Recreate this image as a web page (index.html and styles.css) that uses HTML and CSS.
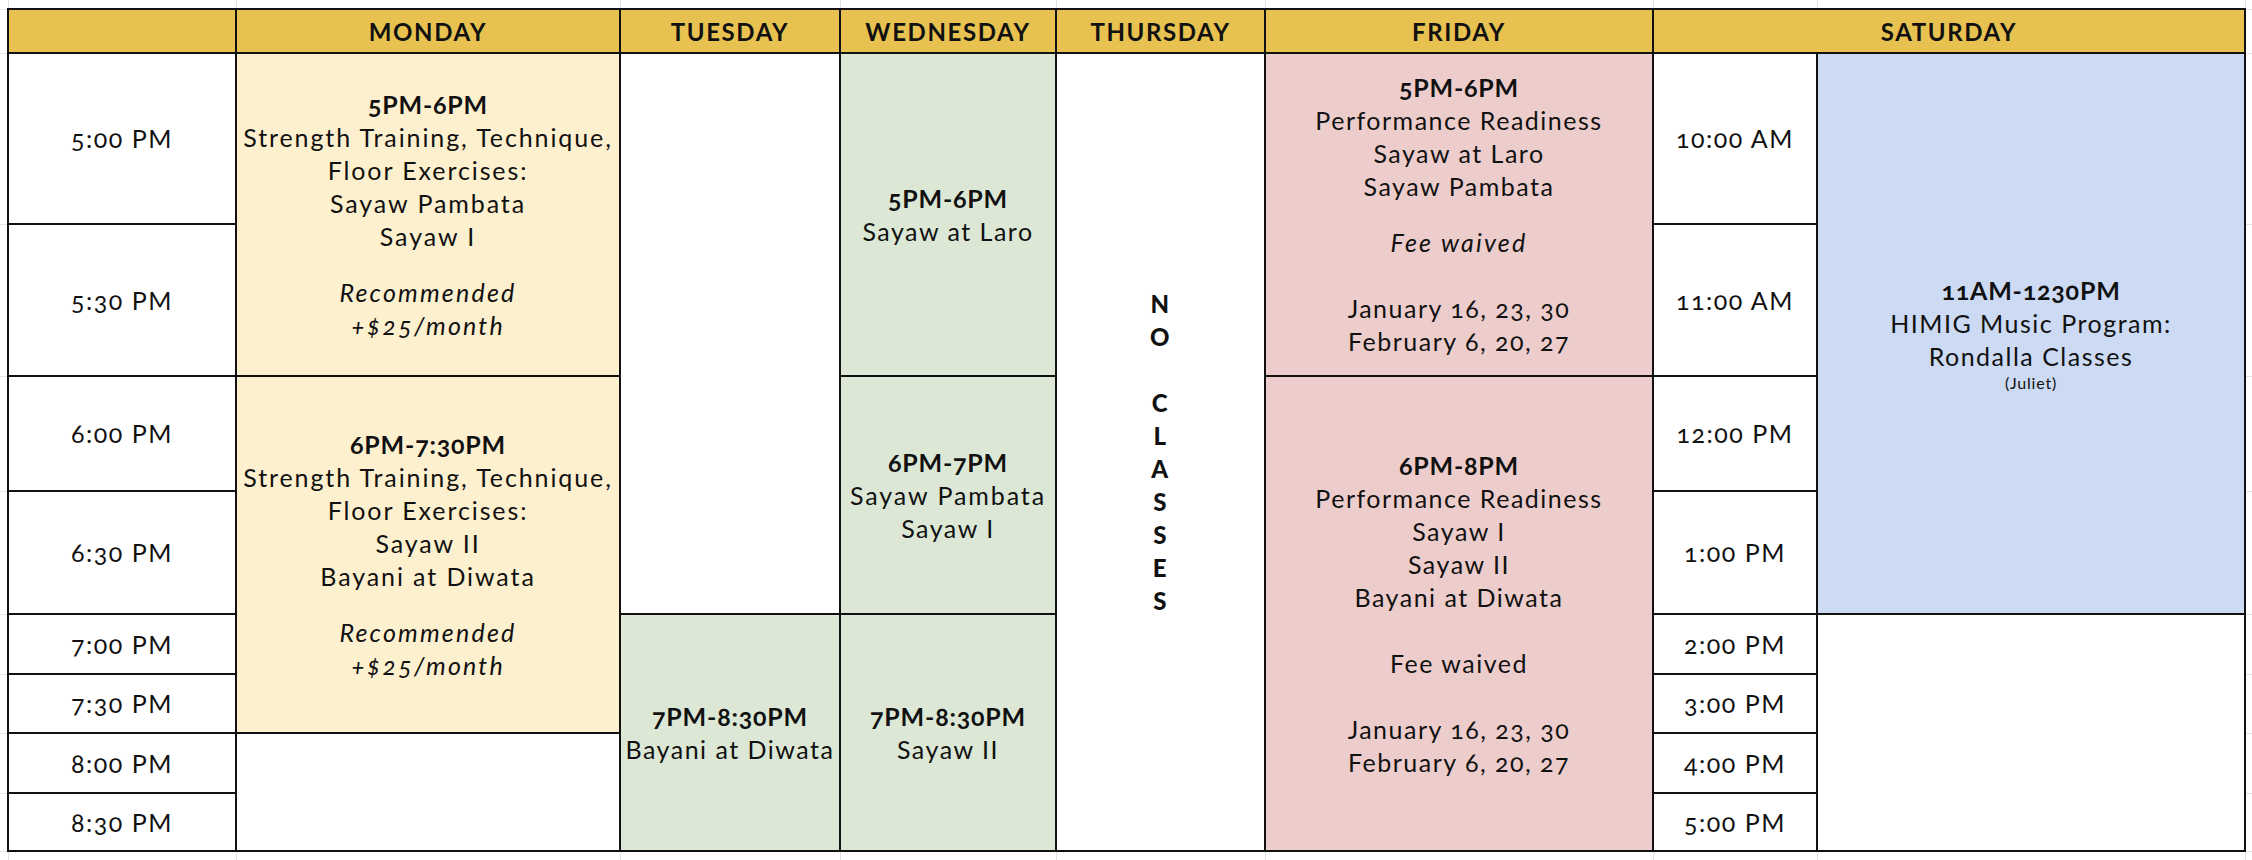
FILE: index.html
```html
<!DOCTYPE html>
<html lang="en">
<head>
<meta charset="utf-8">
<title>Class Schedule</title>
<link rel="stylesheet" href="styles.css">
</head>
<body>
<div class="page">
  <div class="strip-corner"></div>
  <div class="strip-top">
    <div></div><div></div><div></div><div></div><div></div><div></div><div></div><div></div><div></div>
  </div>
  <div class="strip-corner"></div>

  <div class="strip-left">
    <div></div><div></div><div></div><div></div><div></div><div></div><div></div><div></div><div></div><div></div>
  </div>

  <div class="schedule">
    <div class="cell head c1"></div>
    <div class="cell head c2">MONDAY</div>
    <div class="cell head c3">TUESDAY</div>
    <div class="cell head c4">WEDNESDAY</div>
    <div class="cell head c5">THURSDAY</div>
    <div class="cell head c6">FRIDAY</div>
    <div class="cell head c78">SATURDAY</div>

    <div class="cell time c1 r2">5:00 PM</div>
    <div class="cell time c1 r3">5:30 PM</div>
    <div class="cell time c1 r4">6:00 PM</div>
    <div class="cell time c1 r5">6:30 PM</div>
    <div class="cell time c1 r6">7:00 PM</div>
    <div class="cell time c1 r7">7:30 PM</div>
    <div class="cell time c1 r8">8:00 PM</div>
    <div class="cell time c1 r9">8:30 PM</div>

    <div class="cell yellow c2 r2-3">
      <div class="block mon">
        <div class="title">5PM-6PM</div>
        <div>Strength Training, Technique,</div>
        <div>Floor Exercises:</div>
        <div>Sayaw Pambata</div>
        <div>Sayaw I</div>
        <div class="gap-s"></div>
        <div class="it">Recommended</div>
        <div class="it">+$25/month</div>
      </div>
    </div>
    <div class="cell yellow c2 r4-7">
      <div class="block mon">
        <div class="title">6PM-7:30PM</div>
        <div>Strength Training, Technique,</div>
        <div>Floor Exercises:</div>
        <div>Sayaw II</div>
        <div>Bayani at Diwata</div>
        <div class="gap-s"></div>
        <div class="it">Recommended</div>
        <div class="it">+$25/month</div>
      </div>
    </div>
    <div class="cell c2 r8-9"></div>

    <div class="cell c3 r2-5"></div>
    <div class="cell green c3 r6-9">
      <div class="block">
        <div class="title">7PM-8:30PM</div>
        <div>Bayani at Diwata</div>
      </div>
    </div>

    <div class="cell green c4 r2-3">
      <div class="block">
        <div class="title">5PM-6PM</div>
        <div>Sayaw at Laro</div>
      </div>
    </div>
    <div class="cell green c4 r4-5">
      <div class="block">
        <div class="title">6PM-7PM</div>
        <div class="wide">Sayaw Pambata</div>
        <div>Sayaw I</div>
      </div>
    </div>
    <div class="cell green c4 r6-9">
      <div class="block">
        <div class="title">7PM-8:30PM</div>
        <div>Sayaw II</div>
      </div>
    </div>

    <div class="cell c5 r2-9">
      <div class="block vertical">
        <div>N</div><div>O</div><div class="gap-l"></div><div>C</div><div>L</div><div>A</div><div>S</div><div>S</div><div>E</div><div>S</div>
      </div>
    </div>

    <div class="cell pink c6 r2-3">
      <div class="block">
        <div class="title">5PM-6PM</div>
        <div>Performance Readiness</div>
        <div>Sayaw at Laro</div>
        <div>Sayaw Pambata</div>
        <div class="gap-s"></div>
        <div class="it">Fee waived</div>
        <div class="gap-l"></div>
        <div>January 16, 23, 30</div>
        <div>February 6, 20, 27</div>
      </div>
    </div>
    <div class="cell pink c6 r4-9">
      <div class="block">
        <div class="title">6PM-8PM</div>
        <div>Performance Readiness</div>
        <div>Sayaw I</div>
        <div>Sayaw II</div>
        <div>Bayani at Diwata</div>
        <div class="gap-l"></div>
        <div>Fee waived</div>
        <div class="gap-l"></div>
        <div>January 16, 23, 30</div>
        <div>February 6, 20, 27</div>
      </div>
    </div>

    <div class="cell time c7 r2">10:00 AM</div>
    <div class="cell time c7 r3">11:00 AM</div>
    <div class="cell time c7 r4">12:00 PM</div>
    <div class="cell time c7 r5">1:00 PM</div>
    <div class="cell time c7 r6">2:00 PM</div>
    <div class="cell time c7 r7">3:00 PM</div>
    <div class="cell time c7 r8">4:00 PM</div>
    <div class="cell time c7 r9">5:00 PM</div>

    <div class="cell blue c8 r2-5">
      <div class="block">
        <div class="title">11AM-1230PM</div>
        <div>HIMIG Music Program:</div>
        <div>Rondalla Classes</div>
        <div class="small">(Juliet)</div>
      </div>
    </div>
    <div class="cell c8 r6-9"></div>
  </div>

  <div class="strip-right">
    <div></div><div></div><div></div><div></div><div></div><div></div><div></div><div></div><div></div><div></div>
  </div>

  <div class="strip-corner"></div>
  <div class="strip-bottom">
    <div></div><div></div><div></div><div></div><div></div><div></div><div></div><div></div><div></div>
  </div>
  <div class="strip-corner"></div>
</div>
</body>
</html>
```

FILE: styles.css
```css
* { box-sizing: border-box; }

html, body {
  margin: 0;
  padding: 0;
  background: #ffffff;
}

body {
  font-family: Lato, "Noto Sans", "Liberation Sans", sans-serif;
  font-feature-settings: "onum" 1;
  color: #111111;
  width: 2252px;
  height: 860px;
  overflow: hidden;
}

.page {
  display: grid;
  grid-template-columns: 7px 2239px 6px;
  grid-template-rows: 8px 844px 8px;
}

/* faint spreadsheet gridlines outside the table */
.strip-top, .strip-bottom {
  display: grid;
  grid-template-columns: 2px 228px 384px 220px 216px 209px 388px 164px 428px;
}
.strip-top > div, .strip-bottom > div {
  border-right: 1px solid #e3e3e3;
}
.strip-left, .strip-right {
  display: grid;
  grid-template-rows: 2px 44px 171px 152px 115px 123px 60px 59px 60px 58px;
}
.strip-left > div, .strip-right > div {
  border-bottom: 1px solid #e3e3e3;
}

/* the schedule table */
.schedule {
  display: grid;
  grid-template-columns: 228px 384px 220px 216px 209px 388px 164px 428px;
  grid-template-rows: 44px 171px 152px 115px 123px 60px 59px 60px 58px;
  border-top: 2px solid #111;
  border-left: 2px solid #111;
}

.cell {
  border-right: 2px solid #111;
  border-bottom: 2px solid #111;
  display: flex;
  align-items: center;
  justify-content: center;
  text-align: center;
  font-size: 25px;
  line-height: 33px;
  letter-spacing: 1.5px;
  white-space: nowrap;
  background: #ffffff;
}

.head {
  background: #e8c250;
  font-weight: 700;
  font-size: 24px;
  letter-spacing: 1.6px;
  grid-row: 1;
}

.time { font-size: 25px; letter-spacing: 1.5px; }

.yellow { background: #fdf0cf; }
.green  { background: #dce8d5; }
.pink   { background: #edcdcc; }
.blue   { background: #ccdaf4; }

.mon { letter-spacing: 1.9px; }
.wide { letter-spacing: 1.9px; }
.title { font-weight: 700; letter-spacing: 0.8px; }
.it { font-style: italic; letter-spacing: 2.2px; }
.gap-s { height: 23px; }
.gap-l { height: 33px; }
.small { font-size: 16px; line-height: 20px; letter-spacing: 0.8px; }

.vertical { font-weight: 900; font-size: 24px; }

/* columns */
.c1 { grid-column: 1; }
.c2 { grid-column: 2; }
.c3 { grid-column: 3; }
.c4 { grid-column: 4; }
.c5 { grid-column: 5; }
.c6 { grid-column: 6; }
.c7 { grid-column: 7; }
.c8 { grid-column: 8; }
.c78 { grid-column: 7 / 9; }

/* rows */
.r2 { grid-row: 2; }
.r3 { grid-row: 3; }
.r4 { grid-row: 4; }
.r5 { grid-row: 5; }
.r6 { grid-row: 6; }
.r7 { grid-row: 7; }
.r8 { grid-row: 8; }
.r9 { grid-row: 9; }
.r2-3 { grid-row: 2 / 4; }
.r4-7 { grid-row: 4 / 8; }
.r8-9 { grid-row: 8 / 10; }
.r2-5 { grid-row: 2 / 6; }
.r6-9 { grid-row: 6 / 10; }
.r4-5 { grid-row: 4 / 6; }
.r2-9 { grid-row: 2 / 10; }
.r4-9 { grid-row: 4 / 10; }
```
